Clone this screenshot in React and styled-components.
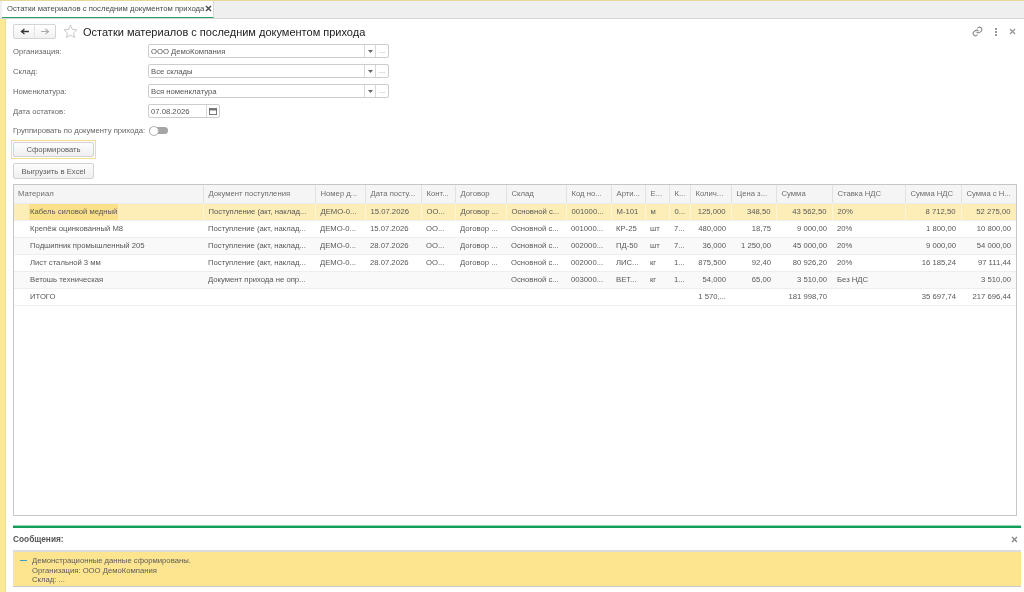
import React from "react"
import styled, { createGlobalStyle } from "styled-components"

const columns = [
  { title: "Материал", width: 189 },
  { title: "Документ поступления", width: 112 },
  { title: "Номер д...", width: 50 },
  { title: "Дата посту...", width: 56 },
  { title: "Конт...", width: 34 },
  { title: "Договор", width: 51 },
  { title: "Склад", width: 60 },
  { title: "Код но...", width: 45 },
  { title: "Арти...", width: 34 },
  { title: "Е...", width: 24 },
  { title: "К...", width: 21 },
  { title: "Колич...", width: 41 },
  { title: "Цена з...", width: 45 },
  { title: "Сумма", width: 56 },
  { title: "Ставка НДС", width: 73 },
  { title: "Сумма НДС", width: 56 },
  { title: "Сумма с Н...", width: 55 },
]

const rightAligned = [11, 12, 13, 15, 16]

const rows = [
  ["Кабель силовой медный", "Поступление (акт, наклад...", "ДЕМО-0...", "15.07.2026", "ОО...", "Договор ...", "Основной с...", "001000...", "М-101", "м", "0...", "125,000", "348,50", "43 562,50", "20%", "8 712,50", "52 275,00"],
  ["Крепёж оцинкованный М8", "Поступление (акт, наклад...", "ДЕМО-0...", "15.07.2026", "ОО...", "Договор ...", "Основной с...", "001000...", "КР-25", "шт", "7...", "480,000", "18,75", "9 000,00", "20%", "1 800,00", "10 800,00"],
  ["Подшипник промышленный 205", "Поступление (акт, наклад...", "ДЕМО-0...", "28.07.2026", "ОО...", "Договор ...", "Основной с...", "002000...", "ПД-50", "шт", "7...", "36,000", "1 250,00", "45 000,00", "20%", "9 000,00", "54 000,00"],
  ["Лист стальной 3 мм", "Поступление (акт, наклад...", "ДЕМО-0...", "28.07.2026", "ОО...", "Договор ...", "Основной с...", "002000...", "ЛИС...", "кг", "1...", "875,500", "92,40", "80 926,20", "20%", "16 185,24", "97 111,44"],
  ["Ветошь техническая", "Документ прихода не опр...", "", "", "", "", "Основной с...", "003000...", "ВЕТ...", "кг", "1...", "54,000", "65,00", "3 510,00", "Без НДС", "", "3 510,00"],
  ["ИТОГО", "", "", "", "", "", "", "", "", "", "", "1 570,...", "", "181 998,70", "", "35 697,74", "217 696,44"],
]

const fields = [
  { label: "Организация:", value: "ООО ДемоКомпания" },
  { label: "Склад:", value: "Все склады" },
  { label: "Номенклатура:", value: "Вся номенклатура" },
]

const App = () => {
  return (
    <Page>
      <GlobalStyle />
      <TabBar>
        <Tab>
          <TabTitle>Остатки материалов с последним документом прихода</TabTitle>
          <TabClose>
            <svg width="7" height="7" viewBox="0 0 7 7">
              <path d="M1 1l5 5M6 1L1 6" stroke="#444" strokeWidth="1.3" />
            </svg>
          </TabClose>
        </Tab>
      </TabBar>
      <Body>
        <SideStrip />
        <Content>
          <Header>
            <NavGroup>
              <NavButton>
                <svg width="9" height="7" viewBox="0 0 10 8">
                  <path d="M10 4H2M5 1L1.5 4 5 7" fill="none" stroke="#333" strokeWidth="1.5" />
                </svg>
              </NavButton>
              <NavButton $disabled>
                <svg width="9" height="7" viewBox="0 0 10 8">
                  <path d="M0 4h8M5 1l3.500 3L5 7" fill="none" stroke="#aaa" strokeWidth="1.300" />
                </svg>
              </NavButton>
            </NavGroup>
            <StarIcon width="15" height="15" viewBox="0 0 15 15">
              <path d="M7.500 1l1.900 4.400 4.600.400-3.500 3.100 1.100 4.700-4.100-2.500-4.100 2.500 1.100-4.700L1 5.800l4.600-.400z" fill="none" stroke="#c8c8c8" />
            </StarIcon>
            <Title>Остатки материалов с последним документом прихода</Title>
            <HeaderTools>
              <svg width="11" height="11" viewBox="0 0 24 24" fill="none" stroke="#888" strokeWidth="2.400">
                <path d="M10 13a5 5 0 0 0 7.500.500l3-3a5 5 0 0 0-7-7l-1.700 1.700" />
                <path d="M14 11a5 5 0 0 0-7.500-.500l-3 3a5 5 0 0 0 7 7l1.700-1.700" />
              </svg>
              <MoreDots>
                <i /><i /><i />
              </MoreDots>
              <svg width="7" height="7" viewBox="0 0 7 7">
                <path d="M1 1l5 5M6 1L1 6" stroke="#999" strokeWidth="1.400" />
              </svg>
            </HeaderTools>
          </Header>

          <Form>
            {fields.map(field => (
              <FormRow key={field.label}>
                <Label>{field.label}</Label>
                <InputBox $width={241}>
                  <InputValue>{field.value}</InputValue>
                  <InputButton $width={11}>
                    <svg width="5" height="3" viewBox="0 0 5 3">
                      <path d="M0 0h5L2.500 3z" fill="#666" />
                    </svg>
                  </InputButton>
                  <InputButton $width={13}>
                    <Ellipsis>...</Ellipsis>
                  </InputButton>
                </InputBox>
              </FormRow>
            ))}
            <FormRow>
              <Label>Дата остатков:</Label>
              <InputBox $width={72}>
                <InputValue>07.08.2026</InputValue>
                <InputButton $width={13}>
                  <svg width="8" height="7" viewBox="0 0 9 8">
                    <rect x=".5" y=".5" width="8" height="7" fill="none" stroke="#666" />
                    <path d="M0 2h9" stroke="#666" strokeWidth="1.500" />
                  </svg>
                </InputButton>
              </InputBox>
            </FormRow>
            <ToggleRow>
              <ToggleLabel>Группировать по документу прихода:</ToggleLabel>
              <Toggle>
                <ToggleKnob />
              </Toggle>
            </ToggleRow>
          </Form>

          <PrimaryFrame>
            <ActionButton>Сформировать</ActionButton>
          </PrimaryFrame>
          <ExportRow>
            <ActionButton>Выгрузить в Excel</ActionButton>
          </ExportRow>

          <TableFrame>
            <Table>
              <colgroup>
                {columns.map(column => (
                  <col key={column.title} style={{ width: column.width }} />
                ))}
              </colgroup>
              <thead>
                <tr>
                  {columns.map(column => (
                    <HeadCell key={column.title}>{column.title}</HeadCell>
                  ))}
                </tr>
              </thead>
              <tbody>
                {rows.map((row, rowIndex) => (
                  <Row key={row[0]} $selected={rowIndex === 0} $striped={rowIndex % 2 === 0}>
                    {row.map((cell, cellIndex) => (
                      <Cell
                        key={cellIndex}
                        $right={rightAligned.includes(cellIndex)}
                        $first={cellIndex === 0}
                        $selected={rowIndex === 0}
                      >
                        {cellIndex === 0 ? <NameText $active={rowIndex === 0}>{cell}</NameText> : cell}
                      </Cell>
                    ))}
                  </Row>
                ))}
              </tbody>
            </Table>
          </TableFrame>

          <Messages>
            <MessagesHeader>
              <MessagesTitle>Сообщения:</MessagesTitle>
              <svg width="7" height="7" viewBox="0 0 7 7">
                <path d="M1 1l5 5M6 1L1 6" stroke="#888" strokeWidth="1.400" />
              </svg>
            </MessagesHeader>
            <MessageBox>
              <MessageDash />
              <MessageText>
                <div>Демонстрационные данные сформированы.</div>
                <div>Организация: ООО ДемоКомпания</div>
                <div>Склад: ...</div>
              </MessageText>
            </MessageBox>
          </Messages>
        </Content>
      </Body>
    </Page>
  )
}

export default App

const GlobalStyle = createGlobalStyle`
  html, body {
    margin: 0;
    padding: 0;
    background: #fff;
  }

  * {
    box-sizing: border-box;
  }
`

const Page = styled.div`
  width: 1024px;
  height: 592px;
  display: flex;
  flex-direction: column;
  overflow: hidden;
  font-family: "Liberation Sans", Arial, sans-serif;
  font-size: 7.7px;
  color: #4b4b4b;
  background: #fff;
  filter: blur(0.4px);
`

const TabBar = styled.div`
  height: 19px;
  flex: none;
  display: flex;
  padding-left: 2px;
  background: #efefef;
  border-top: 1px solid #e4d998;
  border-bottom: 1px solid #d4d4d4;
`

const Tab = styled.div`
  width: 212px;
  height: 17px;
  display: flex;
  align-items: center;
  justify-content: space-between;
  padding: 0 1px 2px 5px;
  background: #fff;
  border-bottom: 1px solid #2aa36b;
  border-right: 1px solid #d8d8d8;
`

const TabTitle = styled.span`
  color: #4a4a4a;
  white-space: nowrap;
`

const TabClose = styled.span`
  display: flex;
`

const Body = styled.div`
  flex: 1;
  min-height: 0;
  display: flex;
`

const SideStrip = styled.div`
  width: 6px;
  flex: none;
  background: #fbe993;
  border-right: 1px solid #e9dc9c;
`

const Content = styled.div`
  flex: 1;
  min-width: 0;
  display: flex;
  flex-direction: column;
  padding: 5px 3px 5px 7px;
`

const Header = styled.div`
  height: 15px;
  flex: none;
  display: flex;
  align-items: center;
`

const NavGroup = styled.div`
  width: 43px;
  height: 15px;
  display: flex;
  border: 1px solid #d4d4d4;
  border-radius: 2px;
  background: linear-gradient(#fff, #f1f1f1);
`

const NavButton = styled.div`
  flex: 1;
  display: flex;
  align-items: center;
  justify-content: center;
  border-left: ${props => (props.$disabled ? "1px solid #e4e4e4" : "none")};
`

const StarIcon = styled.svg`
  margin-left: 7px;
  flex: none;
`

const Title = styled.div`
  margin-left: 5px;
  font-size: 11px;
  color: #222;
  white-space: nowrap;
`

const HeaderTools = styled.div`
  margin-left: auto;
  display: flex;
  align-items: center;
  gap: 12px;
  padding-right: 5px;
`

const MoreDots = styled.div`
  display: flex;
  flex-direction: column;
  gap: 1px;

  i {
    display: block;
    width: 2px;
    height: 2px;
    background: #999;
  }
`

const Form = styled.div`
  flex: none;
  display: flex;
  flex-direction: column;
  margin-top: 2px;
`

const FormRow = styled.div`
  height: 20px;
  display: flex;
  align-items: center;
`

const Label = styled.div`
  width: 135px;
  flex: none;
  color: #666;
`

const InputBox = styled.div`
  width: ${props => props.$width}px;
  height: 14px;
  display: flex;
  align-items: stretch;
  background: #fff;
  border: 1px solid #cdcdcd;
  border-radius: 2px;
`

const InputValue = styled.div`
  flex: 1;
  min-width: 0;
  padding-left: 2px;
  line-height: 13px;
  color: #555;
`

const InputButton = styled.div`
  width: ${props => props.$width}px;
  flex: none;
  display: flex;
  align-items: center;
  justify-content: center;
  border-left: 1px solid #d8d8d8;
`

const Ellipsis = styled.span`
  color: #999;
  line-height: 8px;
`

const ToggleRow = styled.div`
  height: 19px;
  display: flex;
  align-items: center;
`

const ToggleLabel = styled.div`
  width: 136px;
  flex: none;
  color: #666;
  white-space: nowrap;
`

const Toggle = styled.div`
  position: relative;
  width: 19px;
  height: 7px;
  border-radius: 4px;
  background: #a5a5a5;
`

const ToggleKnob = styled.div`
  position: absolute;
  left: 0;
  top: -1.5px;
  width: 10px;
  height: 10px;
  border-radius: 50%;
  background: #fff;
  border: 1px solid #b4b4b4;
`

const PrimaryFrame = styled.div`
  flex: none;
  width: 85px;
  height: 19px;
  margin: 0 0 0 -2px;
  padding: 1px;
  border: 1px solid #f5dc8a;
`

const ExportRow = styled.div`
  flex: none;
  width: 81px;
  height: 16px;
  margin-top: 4px;
`

const ActionButton = styled.div`
  width: 100%;
  height: 100%;
  display: flex;
  align-items: center;
  justify-content: center;
  color: #5c5c5c;
  border: 1px solid #d2d2d2;
  border-radius: 2px;
  background: linear-gradient(#fdfdfd, #efefef);
`

const TableFrame = styled.div`
  flex: none;
  width: 1004px;
  height: 332px;
  margin-top: 5px;
  border: 1px solid #c6c6c6;
  overflow: hidden;
`

const Table = styled.table`
  width: 1002px;
  table-layout: fixed;
  border-collapse: collapse;
`

const HeadCell = styled.th`
  height: 18px;
  padding: 0 2px 0 5px;
  font-weight: normal;
  color: #6e6e6e;
  text-align: left;
  white-space: nowrap;
  overflow: hidden;
  background: #f5f5f5;
  border-right: 1px solid #e2e2e2;
  border-bottom: 1px solid #ebebeb;

  &:first-child {
    padding-left: 4px;
  }
`

const Row = styled.tr`
  background: ${props => (props.$selected ? "#fdeeb8" : props.$striped ? "#f9f9f9" : "#fff")};
`

const Cell = styled.td`
  height: 17px;
  padding: ${props => (props.$first ? "0 4px 0 15px" : props.$right ? "0 5px 0 2px" : "0 2px 0 5px")};
  text-align: ${props => (props.$right ? "right" : "left")};
  white-space: nowrap;
  overflow: hidden;
  color: #585858;
  border-right: ${props => (props.$selected ? "1px solid #fff6d8" : "none")};
  border-bottom: 1px solid #eeeeee;
`

const NameText = styled.span`
  display: inline-block;
  height: 16px;
  line-height: 16px;
  padding: 0 1px;
  background: ${props => (props.$active ? "#fbe08a" : "transparent")};
`

const Messages = styled.div`
  flex: 1;
  min-height: 0;
  margin-top: 10px;
  border-top: 2px solid #0f9d58;
  box-shadow: 0 -1px 0 #9fd8b8;
`

const MessagesHeader = styled.div`
  height: 22px;
  display: flex;
  align-items: center;
  justify-content: space-between;
  padding: 0 3px 0 0;
`

const MessagesTitle = styled.div`
  font-size: 8.3px;
  font-weight: bold;
  color: #555;
`

const MessageBox = styled.div`
  height: 37px;
  display: flex;
  padding: 4px 7px;
  background: #fde48e;
  border-top: 2px solid #dcdcdc;
  border-bottom: 1px solid #c8c8c8;
`

const MessageDash = styled.div`
  width: 7px;
  height: 1px;
  margin: 4px 5px 0 0;
  background: #3aa0c8;
`

const MessageText = styled.div`
  line-height: 9.5px;
  color: #5c5c5c;
`
